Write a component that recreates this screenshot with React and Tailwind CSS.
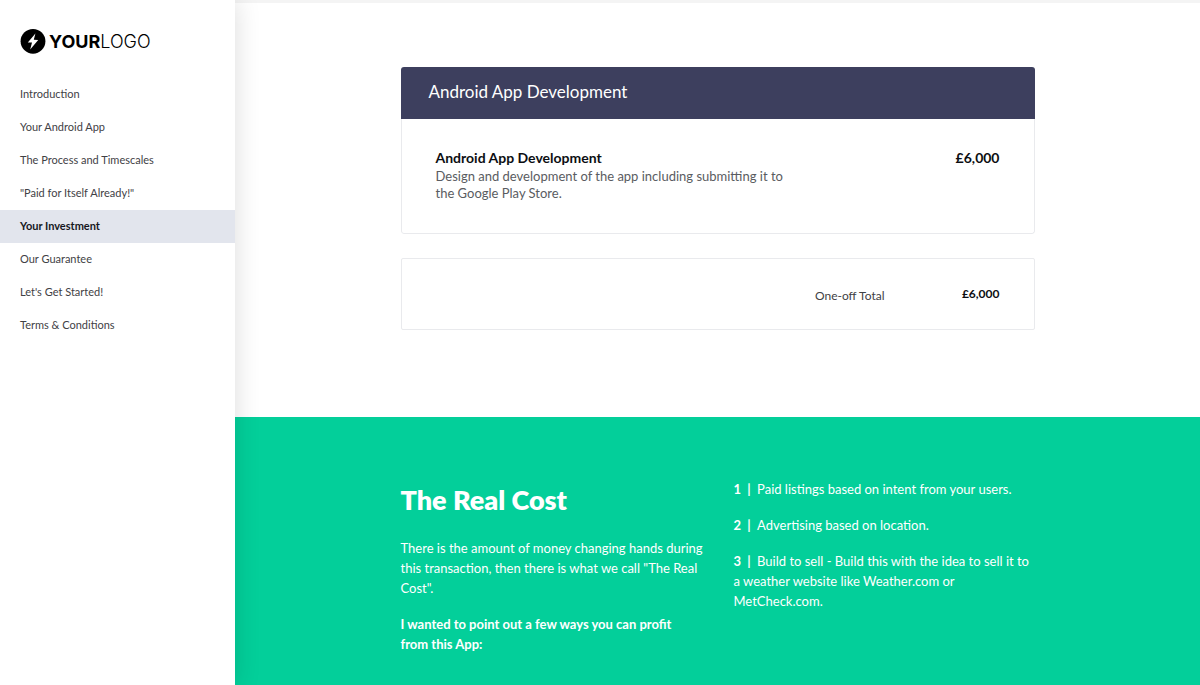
import React from 'react';

const sections = [
  { label: 'Introduction', href: '#introduction' },
  { label: 'Your Android App', href: '#app' },
  { label: 'The Process and Timescales', href: '#process' },
  { label: '"Paid for Itself Already!"', href: '#paid' },
  { label: 'Your Investment', href: '#investment', active: true },
  { label: 'Our Guarantee', href: '#guarantee' },
  { label: "Let's Get Started!", href: '#start' },
  { label: 'Terms & Conditions', href: '#terms' },
];

const ideas = [
  'Paid listings based on intent from your users.',
  'Advertising based on location.',
  'Build to sell - Build this with the idea to sell it to a weather website like Weather.com or MetCheck.com.',
];

function Logo() {
  return (
    <div className="flex items-center gap-[3px] px-5 pt-7">
      <svg width="26" height="26" viewBox="0 0 26 26" aria-hidden="true">
        <circle cx="13" cy="13.3" r="12.4" fill="#000" />
        <path d="M15.4 5.4 L7.8 14.4 L12 14.6 L10.2 21.4 L18.2 12 L13.8 11.8 Z" fill="#fff" />
      </svg>
      <span className="pt-px font-['Inter',sans-serif] text-[18px] leading-6 text-black">
        <span className="font-bold">YOUR</span>
        <span className="font-light">LOGO</span>
      </span>
    </div>
  );
}

function Sidebar() {
  return (
    <aside className="relative z-10 w-[235px] shrink-0 bg-white shadow-[0_0_25px_rgba(0,0,0,0.14)]">
      <Logo />
      <nav className="mt-6">
        {sections.map(({ label, href, active }) => (
          <a
            key={href}
            href={href}
            className={
              active
                ? 'flex h-[33px] items-center bg-[#e2e5ed] px-5 pb-px text-[11px] font-bold text-[#16181d]'
                : 'flex h-[33px] items-center px-5 pb-px text-[11px] text-[#3f4145]'
            }
          >
            {label}
          </a>
        ))}
      </nav>
    </aside>
  );
}

function Pricing() {
  return (
    <section id="investment" className="px-8 pt-16 pb-[87px]">
      <div className="mx-auto max-w-[634px]">
        <div className="overflow-hidden rounded-[3px]">
          <h2 className="bg-[#3d3f5e] px-7 pb-0.5 text-[17px] leading-[50px] text-white">
            Android App Development
          </h2>
          <div className="flex justify-between rounded-b-[3px] border border-t-0 border-[#e9eaed] px-[34px] pt-[30px] pb-[31px]">
            <div className="max-w-[364px]">
              <h3 className="text-[14px] leading-[18px] font-bold text-[#0c0e12]">Android App Development</h3>
              <p className="pt-px text-[13px] leading-[17px] text-[#5a5c61]">
                Design and development of the app including submitting it to the Google Play Store.
              </p>
            </div>
            <span className="text-[14px] leading-[18px] font-bold text-[#0c0e12]">£6,000</span>
          </div>
        </div>

        <div className="mt-6 flex h-[72px] items-center justify-end rounded-[2px] border border-[#e9eaed] px-[34px]">
          <span className="pt-1 text-[12px] text-[#3f4145]">One-off Total</span>
          <span className="w-[115px] text-right text-[12px] font-bold text-[#0c0e12]">£6,000</span>
        </div>
      </div>
    </section>
  );
}

function RealCost() {
  return (
    <section className="grow bg-[#03cf9a] px-8 pt-[62px] pb-8 text-white">
      <div className="mx-auto grid max-w-[634px] grid-cols-[309px_1fr] gap-6 text-[13px] leading-5">
        <div className="space-y-4">
          <h2 className="mb-5 pt-[3px] text-[27px] leading-9 font-extrabold">The Real Cost</h2>
          <p>
            There is the amount of money changing hands during this transaction, then there is what we call "The Real
            Cost".
          </p>
          <p className="pr-6 font-bold">I wanted to point out a few ways you can profit from this App:</p>
        </div>
        <div className="space-y-4">
          {ideas.map((text, i) => (
            <p key={text}>
              <strong>{i + 1}&nbsp; |&nbsp; </strong>
              {text}
            </p>
          ))}
        </div>
      </div>
    </section>
  );
}

export default function App() {
  return (
    <div className="flex min-h-screen bg-white font-['Lato',sans-serif]">
      <Sidebar />
      <main className="flex grow flex-col border-t-[3px] border-[#f4f4f4]">
        <Pricing />
        <RealCost />
      </main>
    </div>
  );
}
